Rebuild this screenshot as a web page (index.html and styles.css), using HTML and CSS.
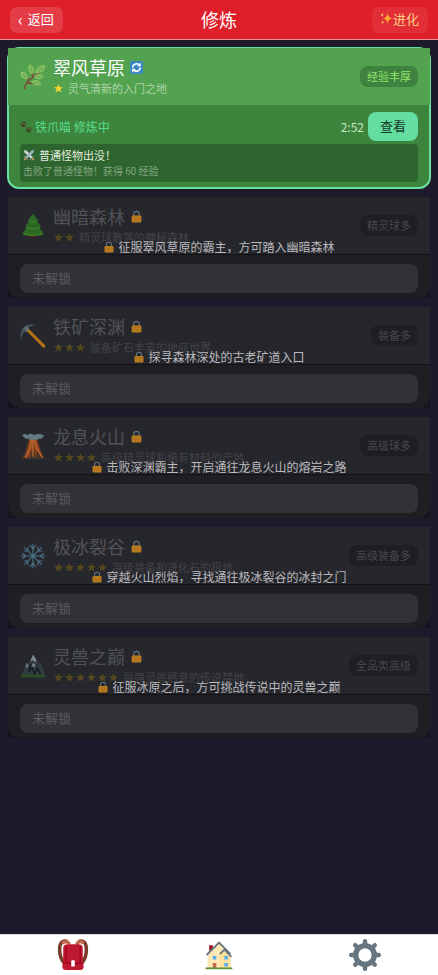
FILE: index.html
```html
<!DOCTYPE html>
<html lang="zh-CN">
<head>
    <meta charset="UTF-8">
    <meta name="viewport" content="width=device-width, initial-scale=1.0">
    <title>修炼</title>
    <link rel="stylesheet" href="styles.css">
</head>
<body>
    <!-- Shared icons -->
    <svg class="sprite" aria-hidden="true">
        <symbol id="star" viewBox="0 0 22 22">
            <path d="M11 2l2.500 6 6.500.5-5 4.200 1.600 6.300-5.600-3.500L5.400 19 7 12.700 2 8.500 8.500 8z" fill="currentColor"/>
        </symbol>
        <symbol id="lock" viewBox="0 0 24 24">
            <path d="M7 12V7.500a5 5 0 0 1 10 0V12" fill="none" stroke="#64727a" stroke-width="2.200"/>
            <rect x="3" y="10" width="18" height="13" rx="2" fill="#b97b20"/>
            <path d="M3 14h18M3 18h18" stroke="#a66c1c" stroke-width="1"/>
        </symbol>
    </svg>

    <header class="topbar">
        <button class="top-btn"><span class="chevron">‹</span>返回</button>
        <h1>修炼</h1>
        <button class="top-btn evolve">
            <svg viewBox="0 0 24 24" aria-hidden="true"><path d="M14 2q1 9 9 10-8 1-9 10-1-9-9-10 8-1 9-10z" fill="#ffac33"/><path d="M4 2q.5 3 3 3.500Q4.500 6 4 9 3.500 6 1 5.500 3.500 5 4 2zM5 16q.5 2.500 3 3-2.500.5-3 3-.5-2.500-3-3 2.500-.5 3-3z" fill="#ffcc68"/></svg>进化
        </button>
    </header>

    <main class="area-list">
        <section class="card active">
            <div class="card-head">
                <svg class="area-icon" viewBox="0 0 36 36" aria-hidden="true">
                    <path d="M6 35Q8 24 17 19T31 6M10 26q8 1 15 0M12 23Q7 17 6 14M19 18Q15 12 15 8" fill="none" stroke="#795238" stroke-width="2.500"/>
                    <g fill="#77b255" stroke="#a5d778" stroke-width="1">
                        <path d="M22 12Q22 3 34 2q1 10-12 10z"/>
                        <path d="M16 14Q9 7 14 1q8 6 2 13z"/>
                        <path d="M10 21Q0 19 2 11q9 1 8 10z"/>
                        <path d="M20 18q5-7 12-1-5 6-12 1z"/>
                        <path d="M16 25q7-5 13 2-6 5-13-2z"/>
                    </g>
                </svg>
                <div class="area-info">
                    <h2>翠风草原
                        <svg class="mark" viewBox="0 0 24 24" role="img" aria-label="循环"><rect width="24" height="24" rx="3" fill="#3b88c3"/><path d="M5 12a7 7 0 0 1 11-5.500M19 12a7 7 0 0 1-11 5.500" fill="none" stroke="#fff" stroke-width="3"/><path d="M13 9l7 1V3zM11 15l-7-1v7z" fill="#fff"/></svg>
                    </h2>
                    <p><span class="stars"><svg><use href="#star"/></svg></span>灵气清新的入门之地</p>
                </div>
                <span class="badge">经验丰厚</span>
            </div>
            <div class="card-body">
                <div class="status">
                    <svg class="paws" viewBox="0 0 36 36" aria-hidden="true"><g fill="#4b3526"><path d="M4 14q5-8 11-1c3 4-2 6-5 4-4 1-7 0-6-3z"/><circle cx="2.500" cy="9" r="2.300"/><circle cx="7" cy="5" r="2.500"/><circle cx="13" cy="5" r="2.500"/><circle cx="17" cy="9" r="2.300"/><path d="M20 30q5-8 11-1c3 4-2 6-5 4-4 1-7 0-6-3z"/><circle cx="18.500" cy="25" r="2.300"/><circle cx="23" cy="21" r="2.500"/><circle cx="29" cy="21" r="2.500"/><circle cx="33" cy="25" r="2.300"/></g></svg>
                    <span class="pet">铁爪喵 修炼中</span>
                    <span class="time">2:52</span>
                    <button class="view-btn">查看</button>
                </div>
                <div class="log">
                    <p class="log-title">
                        <svg viewBox="0 0 24 24" aria-hidden="true"><path d="M2 2l5 1 13 14-3 3L3 7z" fill="#ccd6dd"/><path d="M22 2l-5 1L4 17l3 3L21 7z" fill="#a3b5c1"/><path d="M2 14l8 8M22 14l-8 8" stroke="#8899a6" stroke-width="2"/><path d="M6 18l-4 4M18 18l4 4" stroke="#d99e55" stroke-width="3"/></svg>
                        普通怪物出没！
                    </p>
                    <p class="log-text">击败了普通怪物！获得 60 经验</p>
                </div>
            </div>
        </section>

        <section class="card locked">
            <div class="card-head">
                <svg class="area-icon" viewBox="0 0 36 36" aria-hidden="true"><path d="M15 29h6v6h-6z" fill="#48261c"/><path d="M18 1l7 9-2 1 6 7-3 1 7 10q-15 4-30 0l7-10-3-1 6-7-2-1z" fill="#2c6a24"/><path d="M12 11q6 3 12 0M8 20q10 4 20 0M5 29q13 4 26 0" fill="none" stroke="#3d7f2a" stroke-width="2"/></svg>
                <div class="area-info">
                    <h2>幽暗森林 <svg class="mark"><use href="#lock"/></svg></h2>
                    <p><span class="stars"><svg><use href="#star"/></svg><svg><use href="#star"/></svg></span>精灵球散落的神秘森林</p>
                </div>
                <span class="badge">精灵球多</span>
            </div>
            <div class="card-body"><button class="locked-btn" disabled>未解锁</button></div>
            <div class="unlock-tip"><svg><use href="#lock"/></svg>征服翠风草原的霸主，方可踏入幽暗森林</div>
        </section>

        <section class="card locked">
            <div class="card-head">
                <svg class="area-icon" viewBox="0 0 36 36" aria-hidden="true"><path d="M8 7l25 25" stroke="#b87413" stroke-width="4" stroke-linecap="round"/><path d="M1 24Q-1 10 6 5 12 0 23 3q-9 0-13 5-7 5-9 16z" fill="#42535c"/><path d="M5 7l5-3 3 4-5 5z" fill="#5d6b72"/></svg>
                <div class="area-info">
                    <h2>铁矿深渊 <svg class="mark"><use href="#lock"/></svg></h2>
                    <p><span class="stars"><svg><use href="#star"/></svg><svg><use href="#star"/></svg><svg><use href="#star"/></svg></span>装备矿石丰富的地底世界</p>
                </div>
                <span class="badge">装备多</span>
            </div>
            <div class="card-body"><button class="locked-btn" disabled>未解锁</button></div>
            <div class="unlock-tip"><svg><use href="#lock"/></svg>探寻森林深处的古老矿道入口</div>
        </section>

        <section class="card locked">
            <div class="card-head">
                <svg class="area-icon" viewBox="0 0 36 36" aria-hidden="true"><path d="M0 36Q9 26 12 7h12q3 19 12 29z" fill="#42332b"/><path d="M13 8h10l8 25-7-9-2 11-4-19-4 17-7 2z" fill="#8e401b"/><path d="M16 9l-2 12-7 13M20 9l3 12 8 13M18 9v24" fill="none" stroke="#ba6630" stroke-width="2"/><path d="M3 3q4-3 7 0 5-4 9 0 6-3 14 0-1 5-7 5-2 3-6 1-5 2-8-1-6 0-9-5z" fill="#637982"/></svg>
                <div class="area-info">
                    <h2>龙息火山 <svg class="mark"><use href="#lock"/></svg></h2>
                    <p><span class="stars"><svg><use href="#star"/></svg><svg><use href="#star"/></svg><svg><use href="#star"/></svg><svg><use href="#star"/></svg></span>高级精灵球和稀有材料的产地</p>
                </div>
                <span class="badge">高级球多</span>
            </div>
            <div class="card-body"><button class="locked-btn" disabled>未解锁</button></div>
            <div class="unlock-tip"><svg><use href="#lock"/></svg>击败深渊霸主，开启通往龙息火山的熔岩之路</div>
        </section>

        <section class="card locked">
            <div class="card-head">
                <svg class="area-icon" viewBox="0 0 36 36" aria-hidden="true"><path d="M18 1v34M1 18h34M6 6l24 24M30 6L6 30M14 3l4 5 4-5M14 33l4-5 4 5M3 14l5 4-5 4M33 14l-5 4 5 4M5 11l6 0 0-6M31 11l-6 0 0-6M5 25l6 0 0 6M31 25l-6 0 0 6" fill="none" stroke="#4c7287" stroke-width="1.500"/></svg>
                <div class="area-info">
                    <h2>极冰裂谷 <svg class="mark"><use href="#lock"/></svg></h2>
                    <p><span class="stars"><svg><use href="#star"/></svg><svg><use href="#star"/></svg><svg><use href="#star"/></svg><svg><use href="#star"/></svg><svg><use href="#star"/></svg></span>高级装备和进化石的极地</p>
                </div>
                <span class="badge">高级装备多</span>
            </div>
            <div class="card-body"><button class="locked-btn" disabled>未解锁</button></div>
            <div class="unlock-tip"><svg><use href="#lock"/></svg>穿越火山烈焰，寻找通往极冰裂谷的冰封之门</div>
        </section>

        <section class="card locked">
            <div class="card-head">
                <svg class="area-icon" viewBox="0 0 36 36" aria-hidden="true"><path d="M1 33L9 14l4-1 5-11 8 11 3 1 7 19z" fill="#303a40"/><path d="M18 2l5 8-2 3-3-3-4 2zM9 14l3 4-4 3zM18 14l3 2-1 4-4-1z" fill="#7b858a"/><path d="M15 15l-3 11 5-6 3 9 4-8 5 10" fill="none" stroke="#141b1f" stroke-width="2"/><path d="M1 31q9-3 17 0 9-3 17 0v3H1z" fill="#2b4d22"/></svg>
                <div class="area-info">
                    <h2>灵兽之巅 <svg class="mark"><use href="#lock"/></svg></h2>
                    <p><span class="stars"><svg><use href="#star"/></svg><svg><use href="#star"/></svg><svg><use href="#star"/></svg><svg><use href="#star"/></svg><svg><use href="#star"/></svg><svg><use href="#star"/></svg></span>最强灵兽栖息的传说禁地</p>
                </div>
                <span class="badge">全品类高级</span>
            </div>
            <div class="card-body"><button class="locked-btn" disabled>未解锁</button></div>
            <div class="unlock-tip"><svg><use href="#lock"/></svg>征服冰原之后，方可挑战传说中的灵兽之巅</div>
        </section>
    </main>

    <nav class="bottom-nav">
        <a href="#bag" aria-label="背包">
            <svg viewBox="0 0 36 36"><path d="M12 3Q3 0 3 12q0 9 5 15M24 3q9-3 9 9 0 9-5 15" fill="none" stroke="#7d3b2a" stroke-width="4"/><path d="M6 5q4-5 8 1M30 5q-4-5-8 1" fill="none" stroke="#c1694f" stroke-width="4"/><path d="M7 10q0-4 5-4h12q5 0 5 4v15l1 6q0 4-4 4H10q-4 0-4-4l1-6z" fill="#be1931"/><path d="M10 9v16q0 2 2 2h12q2 0 2-2V9" fill="none" stroke="#a0041e" stroke-width="1.500"/><path d="M7 27q11 3 22 0" stroke="#a0041e" fill="none"/><rect x="16" y="24" width="4" height="7" rx="1" fill="#fff"/></svg>
        </a>
        <a href="#home" aria-label="主页">
            <svg viewBox="0 0 36 36"><path d="M7 7h4v10H7z" fill="#a0041e"/><path d="M5 33V16L18 4l9 9 4 5v15z" fill="#ffe8b6"/><path d="M19 33V18l6-5 6 6v14z" fill="#ffd983" opacity=".5"/><path d="M4 18L18 4l13 13M19 17l5-5 8 8" fill="none" stroke="#66757f" stroke-width="2"/><path d="M11 19h4v4h-4zM24 19h4v4h-4zM24 27h4v4h-4z" fill="#55acee"/><path d="M11 27h4v6h-4z" fill="#c1694f"/><path d="M3 32h30v2H3z" fill="#5c913b"/></svg>
        </a>
        <a href="#settings" aria-label="设置">
            <svg viewBox="0 0 36 36"><g fill="none" stroke="#66757f"><circle cx="18" cy="18" r="10.500" stroke-width="6"/><path d="M18 2.500v5M18 28.500v5M2.500 18h5M28.500 18h5M7 7l3.500 3.500M25.500 25.500L29 29M29 7l-3.500 3.500M10.500 25.500L7 29" stroke-width="5" stroke-linecap="round"/></g></svg>
        </a>
    </nav>
</body>
</html>
```

FILE: styles.css
```css
* {
    box-sizing: border-box;
}

body {
    font-family: 'Noto Sans CJK SC', sans-serif;
    background-color: #1e1a2c;
    color: white;
    margin: 0;
    min-height: 100vh;
    display: flex;
    flex-direction: column;
}

h1, h2, p {
    margin: 0;
    font-weight: 400;
}

button {
    font-family: inherit;
    border: none;
    cursor: pointer;
}

.sprite {
    position: absolute;
    width: 0;
    height: 0;
}

.topbar {
    display: grid;
    grid-template-columns: 1fr auto 1fr;
    align-items: center;
    height: 40px;
    padding: 0 10px;
    background: #de1f29;
    border-bottom: 1px solid #e8929d;
}

.topbar h1 {
    padding-bottom: 2px;
    font-size: 18px;
    line-height: 26px;
}

.top-btn {
    display: flex;
    align-items: center;
    justify-self: start;
    height: 26px;
    padding: 0 9px 2px 8px;
    border-radius: 7px;
    background: #e43d48;
    color: white;
    font-size: 13px;
    line-height: 20px;
}

.chevron {
    margin-right: 5px;
    font-size: 16px;
}

.evolve {
    justify-self: end;
    background: #e12e37;
    color: #ffd080;
}

.evolve svg {
    width: 13px;
    height: 13px;
}

.area-list {
    flex: 1;
    display: flex;
    flex-direction: column;
    gap: 9px;
    padding: 8px;
}

.card {
    position: relative;
    background: #16121f;
}

.card.active {
    margin: -1px;
    border: 2px solid #69dfa0;
    border-radius: 12px;
    background: #3d843d;
}

.card-head {
    display: flex;
    align-items: center;
    gap: 7px;
    padding: 7px 12px;
    background: #26272c;
}

.active .card-head {
    margin: -1px -1px 0;
    background: #52a250;
}

.locked .card-head {
    border-bottom: 1px solid #121216;
}

.area-icon {
    width: 26px;
    height: 26px;
}

.area-info {
    flex: 1;
    padding-bottom: 2px;
}

.area-info h2 {
    display: flex;
    align-items: center;
    gap: 5px;
    font-size: 18px;
    line-height: 24px;
}

.mark {
    width: 13px;
    height: 13px;
}

.area-info p {
    display: flex;
    align-items: center;
    margin-top: 1px;
    color: #b0d5a9;
    font-size: 11px;
    line-height: 16px;
}

.stars {
    display: flex;
    margin-right: 4px;
    color: #f0d22f;
}

.stars svg {
    width: 11px;
    height: 11px;
}

.badge {
    padding: 2px 7px 3px;
    border-radius: 8px;
    background: #3f813e;
    color: #94e66e;
    font-size: 11px;
    line-height: 16px;
}

.card-body {
    padding: 9px 12px 5px;
    border-radius: 0 0 12px 12px;
    background: #1f1e23;
}

.active .card-body {
    padding: 7px 11px 5px;
    background: #3d843d;
}

.status {
    display: flex;
    align-items: center;
    color: #59dc8d;
    font-size: 12px;
}

.paws {
    width: 12px;
    height: 12px;
    margin-right: 3px;
}

.time {
    margin-left: auto;
    margin-right: 4px;
    color: #c6e7bf;
}

.view-btn {
    height: 29px;
    padding: 0 12px 2px;
    border-radius: 8px;
    background: #64dda0;
    color: #183b2a;
    font-size: 13px;
}

.log {
    margin-top: 3px;
    padding: 3px;
    border-radius: 4px;
    background: #2e652e;
    line-height: 16px;
}

.log-title {
    display: flex;
    align-items: center;
    gap: 4px;
    color: #e0ebde;
    font-size: 11px;
}

.log-title svg {
    width: 12px;
    height: 12px;
}

.log-text {
    color: #82a681;
    font-size: 10px;
}

.locked h2 {
    color: #515257;
}

.locked .area-info p {
    color: #414247;
}

.locked .stars {
    color: #55481f;
}

.locked .badge {
    background: #1e1e23;
    color: #47474c;
}

.locked-btn {
    display: block;
    width: 100%;
    height: 29px;
    padding: 0 12px 2px;
    border-radius: 8px;
    background: #323136;
    color: #5b5a60;
    font-size: 13px;
    text-align: left;
}

.unlock-tip {
    position: absolute;
    inset: 0;
    display: flex;
    align-items: center;
    justify-content: center;
    gap: 3px;
    padding-bottom: 2px;
    color: #bbbabf;
    font-size: 12px;
}

.unlock-tip svg {
    width: 12px;
    height: 12px;
}

.bottom-nav {
    display: grid;
    grid-template-columns: repeat(3, 1fr);
    height: 41px;
    background: white;
    border-top: 1px solid #dddde2;
}

.bottom-nav a {
    display: flex;
    align-items: center;
    justify-content: center;
}

.bottom-nav svg {
    width: 32px;
    height: 32px;
}
```
